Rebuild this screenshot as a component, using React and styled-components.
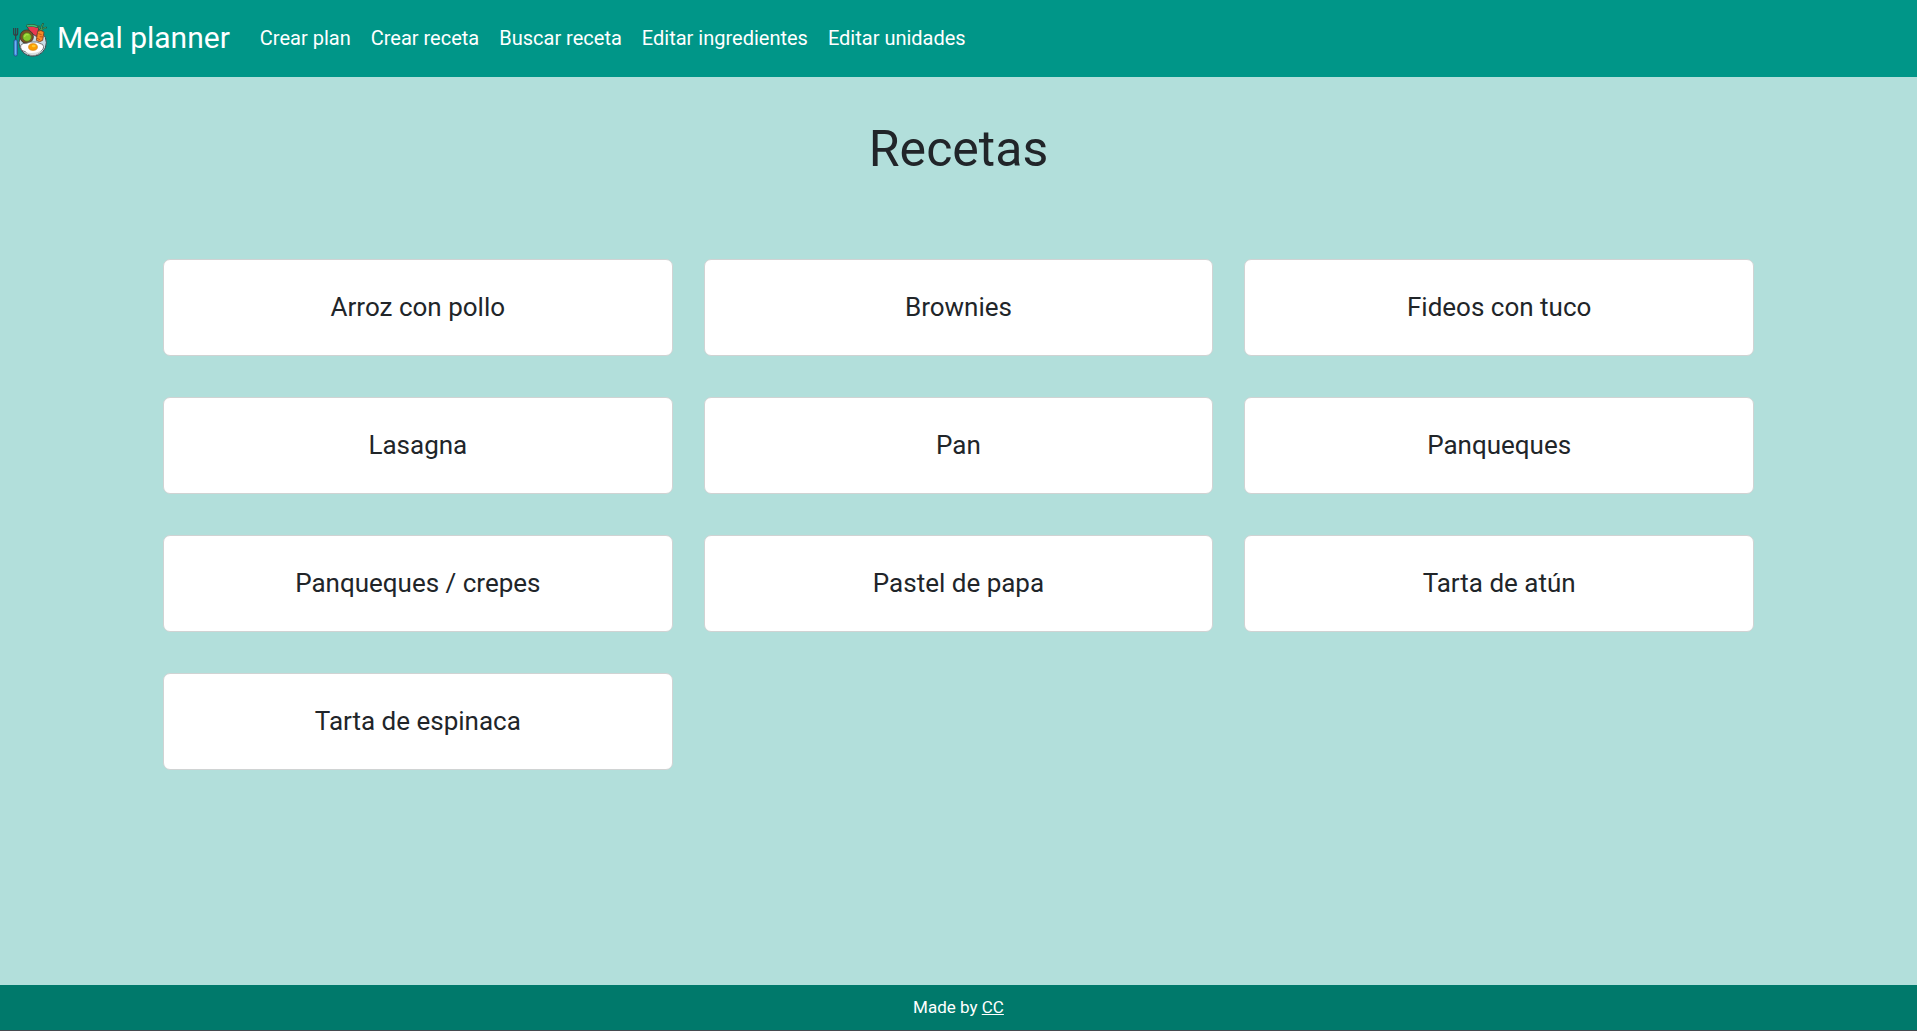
import React from 'react';
import styled, { createGlobalStyle } from 'styled-components';

const GlobalStyle = createGlobalStyle`
  *, *::before, *::after { box-sizing: border-box; }
  body {
    margin: 0;
    background: #b2dfdb;
    color: #212529;
    font-family: Roboto, "Liberation Sans", sans-serif;
    font-size: 20px;
    line-height: 30px;
  }
`;

const Page = styled.div`
  display: flex;
  flex-direction: column;
  min-height: 100vh;
`;

const Navbar = styled.nav`
  display: flex;
  align-items: center;
  flex-wrap: wrap;
  min-height: 77px;
  padding: 8px 12px 10px;
  background: #009688;
`;

const Brand = styled.a`
  display: flex;
  align-items: center;
  gap: 9px;
  margin-right: 20px;
  color: #fff;
  font-size: 30px;
  line-height: 46px;
  text-decoration: none;
`;

const Logo = styled.svg`
  width: 36px;
  height: 36px;
  margin-top: 5px;
`;

const NavList = styled.ul`
  display: flex;
  flex-wrap: wrap;
  margin: 0;
  padding: 0;
  list-style: none;
`;

const NavLink = styled.a`
  display: block;
  padding: 10px;
  color: #fff;
  text-decoration: none;
`;

const Main = styled.main`
  flex: 1;
  width: 100%;
  padding: 40px 163px;
`;

const Title = styled.h1`
  margin: 0 0 78px;
  font-size: 50px;
  font-weight: 400;
  line-height: 64px;
  text-align: center;
`;

const Grid = styled.div`
  display: grid;
  grid-template-columns: repeat(3, minmax(0, 1fr));
  gap: 41px 31px;
`;

const Card = styled.a`
  display: block;
  padding: 32px 20px;
  border: 1px solid #d0d3d3;
  border-radius: 7px;
  background: #fff;
  color: inherit;
  font-size: 26px;
  line-height: 31px;
  text-align: center;
  text-decoration: none;
`;

const Footer = styled.footer`
  padding: 8px;
  border-bottom: 1px solid #454b50;
  background: #00796b;
  color: #fff;
  font-size: 17px;
  line-height: 29px;
  text-align: center;
`;

const FooterLink = styled.a`
  color: inherit;
`;

const links = ['Crear plan', 'Crear receta', 'Buscar receta', 'Editar ingredientes', 'Editar unidades'];

const recipes = [
  'Arroz con pollo',
  'Brownies',
  'Fideos con tuco',
  'Lasagna',
  'Pan',
  'Panqueques',
  'Panqueques / crepes',
  'Pastel de papa',
  'Tarta de atún',
  'Tarta de espinaca',
];

function MealLogo() {
  return (
    <Logo viewBox="36 66 108 108" aria-hidden="true">
      <circle cx="98" cy="128" r="41" fill="#c9dde6" stroke="#3f4a4f" strokeWidth="3" />
      <path d="M80 78 L106 77 Q112 79 116 86 L110 110 L92 98 Z" fill="#e8384f" stroke="#3a3d3a" strokeWidth="2.5" />
      <path d="M80 78 Q96 73 112 80" fill="none" stroke="#2f5a40" strokeWidth="8" />
      <path d="M81 78 Q96 74 111 80" fill="none" stroke="#42bd72" strokeWidth="4.5" />
      <path d="M124 90 Q115 86 117 79 M124 90 Q123 78 129 72 M125 90 Q130 82 138 83" fill="none" stroke="#2f4f3a" strokeWidth="5.5" strokeLinecap="round" />
      <path d="M124 90 Q115 86 117 79 M124 90 Q123 78 129 72 M125 90 Q130 82 138 83" fill="none" stroke="#3fb562" strokeWidth="2.5" />
      <path d="M113 94 Q123 88 132 96 L128 121 Q119 129 109 121 Z" fill="#f78a26" stroke="#754124" strokeWidth="2.5" />
      <path d="M115 101 L125 104 M119 110 L130 111 M111 115 L120 119" stroke="#b64c18" strokeWidth="2.5" />
      <circle cx="80" cy="110" r="20" fill="#795026" stroke="#493d2b" strokeWidth="3" />
      <circle cx="81" cy="111" r="13" fill="#85c829" stroke="#55701f" strokeWidth="2.5" />
      <path d="M73 111 Q77 100 86 105" fill="none" stroke="#a9df45" strokeWidth="4" />
      <path d="M62 136 Q68 128 80 130 Q90 124 101 126 Q112 124 119 130 Q130 131 131 140 Q131 148 124 152 Q116 166 98 166 Q82 166 76 155 Q60 152 62 136 Z" fill="#fff" stroke="#5c6262" strokeWidth="2.5" />
      <path d="M78 156 Q98 163 123 152 Q115 165 98 165 Q84 165 78 156 Z" fill="#dbe0df" />
      <ellipse cx="99" cy="141" rx="13" ry="10" fill="#fb9e00" stroke="#d88613" strokeWidth="2.5" />
      <ellipse cx="101" cy="138" rx="6" ry="4" fill="#ffc82e" />
      <path d="M41 84 V100 Q41 106 47 106 Q53 106 53 100 V84 M47 84 V120" fill="none" stroke="#373b42" strokeWidth="3.5" />
      <rect x="42" y="119" width="10" height="49" rx="4" fill="#4a97ee" stroke="#284d78" strokeWidth="2.5" />
      <path d="M46 124 V162" stroke="#79b8f5" strokeWidth="3" />
    </Logo>
  );
}

export default function App() {
  return (
    <Page>
      <GlobalStyle />
      <Navbar>
        <Brand href="#">
          <MealLogo />
          Meal planner
        </Brand>
        <NavList>
          {links.map((label) => (
            <li key={label}>
              <NavLink href="#">{label}</NavLink>
            </li>
          ))}
        </NavList>
      </Navbar>
      <Main>
        <Title>Recetas</Title>
        <Grid>
          {recipes.map((name) => (
            <Card href="#" key={name}>{name}</Card>
          ))}
        </Grid>
      </Main>
      <Footer>
        Made by <FooterLink href="#">CC</FooterLink>
      </Footer>
    </Page>
  );
}
